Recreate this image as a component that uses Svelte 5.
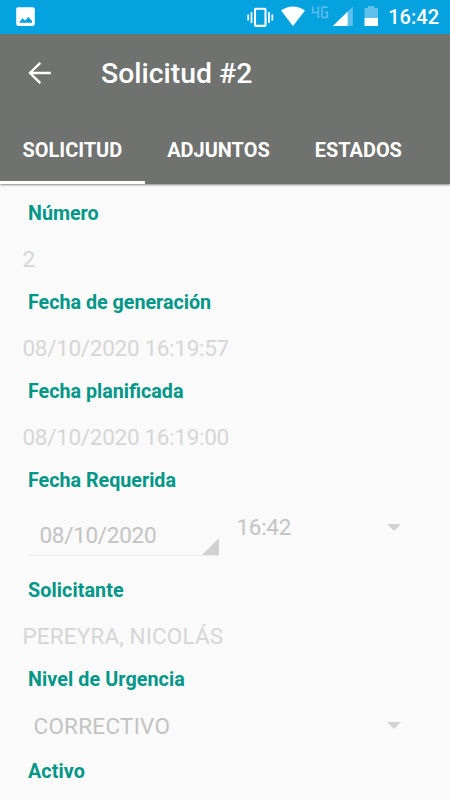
<script>
  const tabs = ['SOLICITUD', 'ADJUNTOS', 'ESTADOS'];
  const dates = [
    { label: 'Número', value: '2' },
    { label: 'Fecha de generación', value: '08/10/2020 16:19:57' },
    { label: 'Fecha planificada', value: '08/10/2020 16:19:00' }
  ];
</script>

{#snippet caret()}
  <svg class="caret" width="14" height="7" viewBox="0 0 14 7"><path d="M0 0h14L7 7z" fill="#d2d2d2" /></svg>
{/snippet}

<div class="screen">
  <div class="status">
    <svg width="450" height="34" viewBox="0 0 450 34">
      <path fill="#fff" fill-rule="evenodd" d="M18 7.3h15a1.8 1.8 0 0 1 1.8 1.8v15a1.8 1.8 0 0 1-1.8 1.8H18a1.8 1.8 0 0 1-1.8-1.8v-15A1.8 1.8 0 0 1 18 7.3zM19 22.7h13V21l-3.8-4-3 3.5-2.7-2.2z" />
      <g fill="none" stroke="#fff">
        <rect x="255" y="8.7" width="10.5" height="17.2" rx="1" stroke-width="2.1" />
        <path stroke-width="1.7" d="M251.5 12v11M248.2 14.5v6M269 12v11M272.3 14.5v6" />
      </g>
      <path fill="#fff" d="M281 10.5Q293 2.5 305 10.5L293 26z" />
      <g fill="none" stroke="#5abde9" stroke-width="1.7">
        <path d="M312.7 6.5v6h6M318.3 6.5v11.5" />
        <path d="M327.5 7.2h-4.8q-.7 0-.7.7v8.7q0 .7.7.7h4.6v-5h-2.5" />
      </g>
      <path fill="#5fc1eb" d="M347.5 11.8l5.3-5v19.2h-5.3z" />
      <path fill="#fff" d="M332.8 26l14.9-14.5V26z" />
      <path fill="#5fc1eb" d="M364.5 18.3V8h3.5V6h6.5v2h3.500v10.300z" />
      <path fill="#fff" d="M364.500 18h13.500v8h-13.500z" />
    </svg>
    <span class="clock">16:42</span>
  </div>

  <header>
    <div class="toolbar">
      <svg width="24" height="24" viewBox="0 0 24 24"><path d="M22.8 12H2M12.3 1.8L2 12l10.300 10.200" fill="none" stroke="#fff" stroke-width="2.400" /></svg>
      <h1>Solicitud #2</h1>
    </div>
    <nav>
      {#each tabs as tab, i}
        <span class="tab" class:active={i === 0}>{tab}</span>
      {/each}
    </nav>
  </header>

  <main>
    {#each dates as f}
      <div class="field">
        <div class="label">{f.label}</div>
        <div class="value numeric">{f.value}</div>
      </div>
    {/each}

    <div class="required">
      <div class="label">Fecha Requerida</div>
      <div class="row numeric">
        <div class="date">
          <span>08/10/2020</span>
          <svg width="17" height="17" viewBox="0 0 17 17"><path d="M17 0v17H0z" fill="#d0d0d0" /></svg>
        </div>
        <div class="time">
          <span>16:42</span>
          {@render caret()}
        </div>
      </div>
    </div>

    <div class="field">
      <div class="label loose">Solicitante</div>
      <div class="value">PEREYRA, NICOLÁS</div>
    </div>

    <div class="urgency">
      <div class="label loose">Nivel de Urgencia</div>
      <div class="select">
        <span>CORRECTIVO</span>
        {@render caret()}
      </div>
    </div>

    <div class="label loose">Activo</div>
  </main>
</div>

<style>
  :global(body) {
    margin: 0;
    overflow: hidden;
  }
  .screen {
    width: 450px;
    height: 800px;
    overflow: hidden;
    background: #fafafa;
    font-family: Roboto, sans-serif;
    display: flex;
    flex-direction: column;
  }
  svg {
    display: block;
    flex: none;
  }
  .status {
    position: relative;
    height: 34px;
    flex: none;
    background: #05a2e0;
  }
  .clock {
    position: absolute;
    right: 11px;
    top: 5px;
    font-size: 20px;
    line-height: 25px;
    font-weight: 500;
    color: #fff;
  }
  header {
    height: 150px;
    flex: none;
    display: flex;
    flex-direction: column;
    background: #70726f;
    color: #fff;
    box-shadow: 0 1px 2px rgba(0, 0, 0, 0.45);
  }
  .toolbar {
    height: 79px;
    display: flex;
    align-items: center;
    padding-left: 28px;
    gap: 49px;
  }
  .toolbar svg {
    margin-bottom: 1px;
  }
  h1 {
    margin: 0;
    font-size: 28.4px;
    line-height: 34px;
    font-weight: 500;
  }
  nav {
    height: 71px;
    display: flex;
  }
  .tab {
    box-sizing: border-box;
    padding: 25px 22.5px 0;
    font-size: 19.95px;
    line-height: 24px;
    font-weight: 700;
    border-bottom: 3px solid transparent;
  }
  .tab.active {
    border-bottom-color: #fff;
  }
  main {
    padding-top: 18px;
  }
  .field {
    height: 89px;
  }
  .label {
    padding-left: 28px;
    font-size: 19.7px;
    line-height: 24px;
    font-weight: 700;
    color: #009688;
  }
  .loose {
    letter-spacing: 0.1px;
  }
  .value {
    padding: 19px 0 0 22.5px;
    font-size: 22.5px;
    line-height: 28px;
    letter-spacing: 0.15px;
    color: #d6d6d6;
  }
  .numeric {
    letter-spacing: -0.3px;
  }
  .required {
    height: 110px;
  }
  .row {
    display: flex;
    padding-left: 28px;
    font-size: 22.5px;
    line-height: 28px;
    color: #c3c3c3;
  }
  .date {
    box-sizing: border-box;
    width: 191px;
    height: 62.5px;
    margin-right: 17.5px;
    padding: 28px 0 0 11.5px;
    display: flex;
    justify-content: space-between;
    border-bottom: 1.5px solid #ececec;
  }
  .date svg {
    margin-top: 17px;
  }
  .time {
    width: 164px;
    padding-top: 20px;
    display: flex;
    justify-content: space-between;
  }
  .caret {
    margin-top: 11px;
  }
  .urgency {
    height: 92px;
  }
  .select {
    width: 367px;
    margin-left: 33.5px;
    padding-top: 19.5px;
    display: flex;
    justify-content: space-between;
    font-size: 22.5px;
    line-height: 28px;
    letter-spacing: 0.25px;
    color: #c3c3c3;
  }
  .select .caret {
    margin-top: 10.5px;
  }
</style>
